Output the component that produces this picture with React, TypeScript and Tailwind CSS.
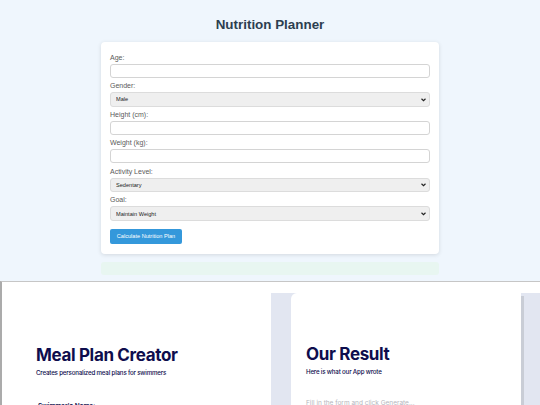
import React from 'react';

/**
 * Nutrition planner form on top, meal plan creator preview below.
 */
const fields = [
    { label: 'Age:', type: 'input' },
    { label: 'Gender:', type: 'select', value: 'Male' },
    { label: 'Height (cm):', type: 'input' },
    { label: 'Weight (kg):', type: 'input' },
    { label: 'Activity Level:', type: 'select', value: 'Sedentary' },
    { label: 'Goal:', type: 'select', value: 'Maintain Weight' },
];

const Chevron: React.FC = () => (
    <svg className="absolute right-[4px] top-1/2 -translate-y-1/2 w-[5px] h-[4px]" viewBox="0 0 10 8">
        <path d="M1 1.5 L5 5.5 L9 1.5" fill="none" stroke="#222" strokeWidth="2.2" />
    </svg>
);

const App: React.FC = () => {
    return (
        <div className="w-[540px] h-[405px] overflow-hidden bg-white font-['Liberation_Sans',Arial,sans-serif]">
            {/* Top - Nutrition Planner */}
            <section className="h-[281px] bg-[#eff6fd] flex flex-col items-center">
                <h1 className="mt-[16px] text-[13.4px] leading-[18px] font-bold text-[#2c3e50]">
                    Nutrition Planner
                </h1>

                <div className="mt-[8px] w-[338px] bg-white rounded-[4px] shadow-[0_1px_4px_rgba(0,0,0,0.12)] px-[9px] pt-[11px] pb-[9px]">
                    <div className="flex flex-col gap-[3.3px]">
                        {fields.map((f) => (
                            <div key={f.label}>
                                <label className="block text-[7px] leading-[9px] text-[#5a5a5a]">{f.label}</label>
                                {f.type === 'input' ? (
                                    <input
                                        type="text"
                                        className="mt-[2px] block w-full h-[14px] border border-[#d4d4d4] rounded-[3px] bg-white outline-none"
                                    />
                                ) : (
                                    <div className="relative mt-[2px]">
                                        <select
                                            defaultValue={f.value}
                                            className="block w-full h-[14.5px] appearance-none border border-[#dcdcdc] rounded-[3px] bg-[#efefef] pl-[5px] text-[5.6px] text-[#222] outline-none"
                                        >
                                            <option>{f.value}</option>
                                        </select>
                                        <Chevron />
                                    </div>
                                )}
                            </div>
                        ))}
                    </div>

                    <button className="mt-[8.5px] w-[72px] h-[15px] bg-[#3498db] rounded-[2px] text-white text-[5.6px] leading-none">
                        Calculate Nutrition Plan
                    </button>
                </div>

                <div className="mt-[8px] w-[338px] h-[13px] bg-[#e8f6f1] rounded-[3px]"></div>
            </section>

            {/* Bottom - Meal Plan Creator preview */}
            <section className="h-[124px] flex border-t border-t-[#c6c6c6] border-l-2 border-l-[#ababab] font-['Inter',sans-serif] text-[#0e0d4d]">
                {/* Left column */}
                <div className="w-[269px] shrink-0 pl-[34px] pt-[63px]">
                    <h2 className="text-[17px] leading-[20px] font-bold tracking-[-0.02em]">Meal Plan Creator</h2>
                    <p className="mt-[4px] text-[6.2px] leading-[8px] font-medium tracking-[-0.03em]">
                        Creates personalized meal plans for swimmers
                    </p>
                    <p className="mt-[25px] ml-[2px] text-[6.5px] leading-[8px] font-semibold">Swimmer's Name:</p>
                </div>

                {/* Right column */}
                <div className="flex-1 pt-[11px]">
                    <div className="h-full bg-[#e2e6f1] pl-[20px] flex">
                        <div className="w-[230px] h-full bg-white rounded-tl-[6px] shadow-[3px_3px_0_#c9cdd6] pl-[15px] pt-[51px]">
                            <h2 className="text-[17px] leading-[20px] font-bold tracking-[-0.02em]">Our Result</h2>
                            <p className="mt-[4px] text-[6.2px] leading-[8px] font-medium tracking-[-0.03em]">
                                Here is what our App wrote
                            </p>
                            <p className="mt-[23px] text-[6.5px] leading-[8px] text-[#b5b5bd]">
                                Fill in the form and click Generate...
                            </p>
                        </div>
                    </div>
                </div>
            </section>
        </div>
    );
};

export default App;
